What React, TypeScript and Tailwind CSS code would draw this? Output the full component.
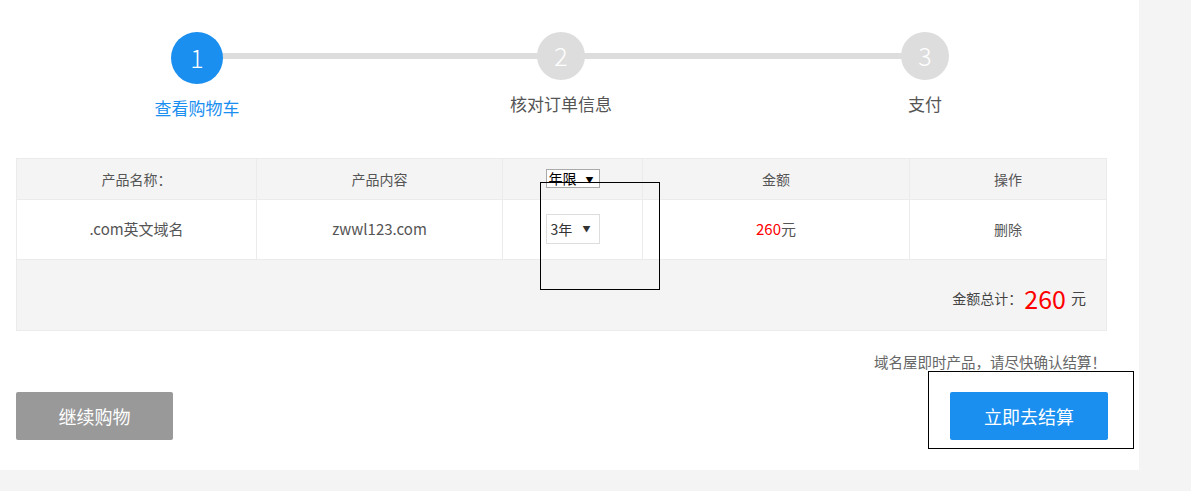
import React from 'react';

const font = { fontFamily: '"Microsoft YaHei", "Noto Sans CJK SC", "Noto Sans", sans-serif' };

const steps = [
  { n: 1, label: '查看购物车', active: true },
  { n: 2, label: '核对订单信息', active: false },
  { n: 3, label: '支付', active: false },
];

// full-width punctuation, kept one em wide
function P({ c }: { c: string }) {
  return <span className="inline-block w-[1em] text-center">{c}</span>;
}

export default function App() {
  return (
    <div className="min-h-[491px] w-full bg-[#f4f4f4] text-[#555]" style={font}>
      <div className="relative w-[1139px] h-[470px] bg-white">
        {/* steps */}
        <div className="h-[158px] pt-[32px]">
          <div className="relative mx-[15px] w-[1092px] grid grid-cols-3">
            <div className="absolute top-[21px] left-[182px] right-[182px] h-[6px] bg-[#dddddd]"></div>
            {steps.map((s) => (
              <div key={s.n} className="relative flex flex-col items-center">
                <div
                  className={`flex items-center justify-center rounded-full text-white text-[25px] font-light ${
                    s.active ? 'w-[52px] h-[52px] bg-[#1a8fef]' : 'w-[48px] h-[48px] bg-[#dddddd]'
                  }`}
                >
                  {s.n}
                </div>
                <div className={`mt-[13px] text-[17px] leading-[22px] ${s.active ? 'text-[#1a8fef]' : 'text-[#555]'}`}>
                  {s.label}
                </div>
              </div>
            ))}
          </div>
        </div>

        {/* table */}
        <div className="ml-[16px] w-[1091px] border border-[#ebebeb] text-[14px]">
          <div className="grid grid-cols-[240px_246px_140px_267px_196px] h-[41px] bg-[#f4f4f4] border-b border-[#ebebeb]">
            <div className="flex items-center justify-center border-r border-[#ebebeb]">
              产品名称<P c="：" />
            </div>
            <div className="flex items-center justify-center border-r border-[#ebebeb]">产品内容</div>
            <div className="flex items-start justify-center pt-[10px] border-r border-[#ebebeb]">
              <div className="relative w-[54px] h-[19px] border border-[#aaa] bg-white text-black text-[14px] leading-[17px] pl-[2px]">
                年限
                <span className="absolute right-[5px] top-[1px] text-[8px] leading-[17px]">▼</span>
              </div>
            </div>
            <div className="flex items-center justify-center border-r border-[#ebebeb]">金额</div>
            <div className="flex items-center justify-center">操作</div>
          </div>
          <div className="grid grid-cols-[240px_246px_140px_267px_196px] h-[59px] bg-white">
            <div className="flex items-center justify-center border-r border-[#ebebeb] text-[15px]">.com英文域名</div>
            <div className="flex items-center justify-center border-r border-[#ebebeb] text-[15px]">zwwl123.com</div>
            <div className="flex items-start justify-center pt-[14px] border-r border-[#ebebeb]">
              <div className="relative w-[54px] h-[30px] border border-[#dddddd] bg-white text-[#333] text-[14px] leading-[28px] pl-[4px]">
                3年
                <span className="absolute right-[8px] top-0 text-[8px] leading-[28px]">▼</span>
              </div>
            </div>
            <div className="flex items-center justify-center border-r border-[#ebebeb] text-[15px]">
              <span className="text-[#ff0000]">260</span>元
            </div>
            <div className="flex items-center justify-center">删除</div>
          </div>
          <div className="h-[71px] bg-[#f4f4f4] border-t border-[#ebebeb] flex items-center justify-end pr-[20px] pt-[6px]">
            <span className="text-[14px] text-[#444]">
              金额总计<P c="：" />
            </span>
            <span className="text-[25px] text-[#ff0000] ml-[2px] mr-[5px] leading-none">260</span>
            <span className="text-[15px] text-[#444]">元</span>
          </div>
        </div>

        {/* notice */}
        <div className="ml-[16px] w-[1090px] mt-[21px] text-right text-[14.5px] leading-[20px] text-[#666]">
          域名屋即时产品<P c="，" />请尽快确认结算<P c="！" />
        </div>

        {/* buttons */}
        <div className="ml-[16px] w-[1092px] mt-[20px] flex justify-between">
          <button className="w-[157px] h-[48px] rounded-[2px] bg-[#999999] text-white text-[18px]">继续购物</button>
          <button className="w-[158px] h-[48px] rounded-[2px] bg-[#1a8fef] text-white text-[18px]">立即去结算</button>
        </div>

        {/* outline overlays */}
        <div className="absolute left-[540px] top-[182px] w-[120px] h-[108px] border border-black pointer-events-none"></div>
        <div className="absolute left-[928px] top-[371px] w-[206px] h-[78px] border border-black pointer-events-none"></div>
      </div>
    </div>
  );
}
